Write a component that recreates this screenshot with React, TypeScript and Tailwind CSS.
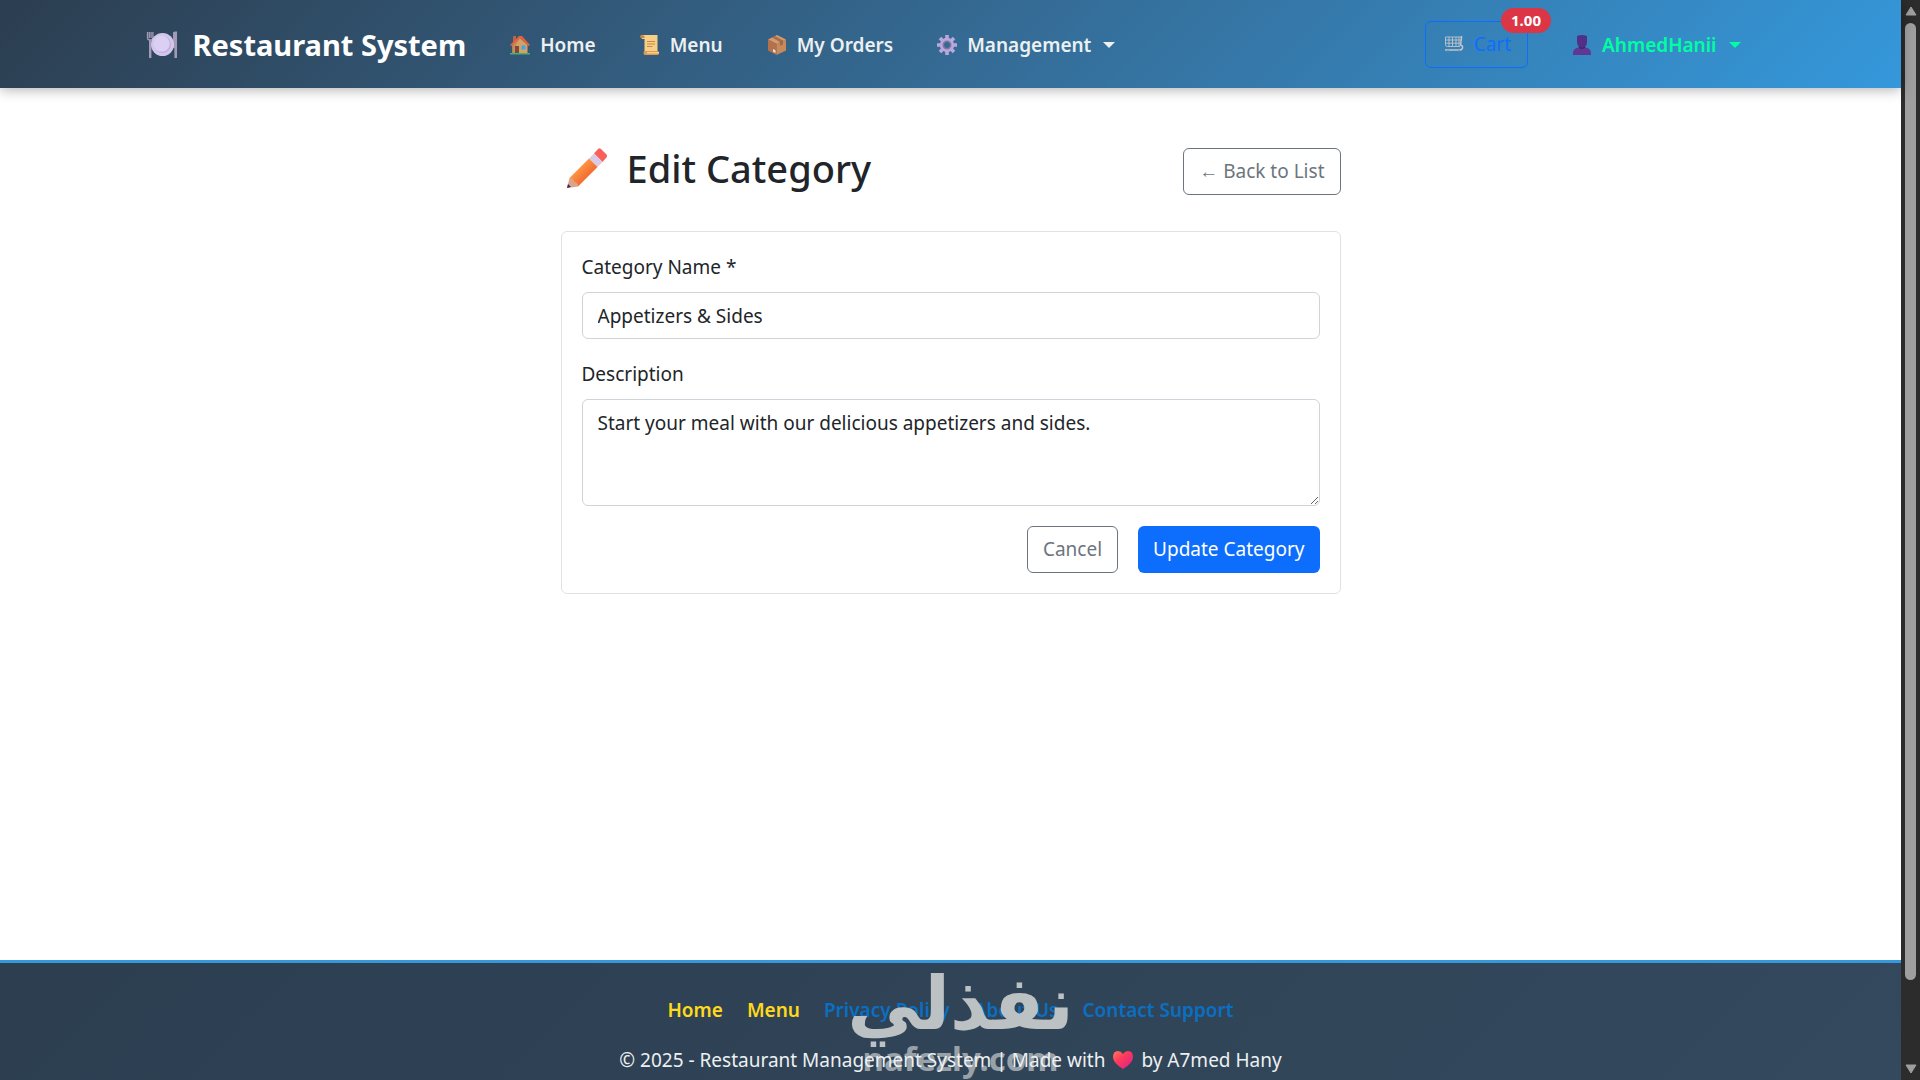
import React from "react";

type IconProps = { className?: string };

const PlateIcon = ({ className }: IconProps) => (
  <svg viewBox="0 0 32 28" className={className} aria-hidden="true">
    <g fill="none" stroke="#a39bb5" strokeWidth="1.3">
      <path d="M1.5 1v6q0 2 2.7 2t2.7-2V1M3.3 1v6M5.1 1v6" />
      <path d="M4.2 9v18" strokeWidth="2.4" />
    </g>
    <path d="M27 1.5q1-1.5 4-1V27h-2.6V17H27z" fill="#a39bb5" />
    <circle cx="16.500" cy="13.500" r="11.500" fill="#d3c6ec" />
    <circle cx="16.500" cy="13.500" r="8.600" fill="#c2b1e0" />
    <circle cx="15.600" cy="12.800" r="8" fill="#dccff4" />
  </svg>
);

const HouseIcon = ({ className }: IconProps) => (
  <svg viewBox="0 0 20 20" className={className} aria-hidden="true">
    <path d="M3 1h3v6H3z" fill="#b5654a" />
    <path d="M2.5 10 10 3l7.5 7v8.5h-15z" fill="#d9a066" />
    <path d="M10 3 2.5 10v8.5H6V10z" fill="#c98b58" />
    <path d="M0 10 9 1h3l8 9-1.5 1L10.5 3 1.5 11z" fill="#e8603c" />
    <path d="M5 11h4v8H5z" fill="#7a4a3c" />
    <path d="M11.5 10.500h4v4h-4z" fill="#3aa7e8" />
    <path d="M0 18h20v1.500H0z" fill="#3fb27a" />
  </svg>
);

const ScrollIcon = ({ className }: IconProps) => (
  <svg viewBox="0 0 20 20" className={className} aria-hidden="true">
    <path d="M3 0h14.500v17H4.500V4H2Q0 0 3 0z" fill="#f8cf86" />
    <path d="M1.500 0Q0 0 0 1.500T1.500 3h3V1.500Q4 0 1.500 0z" fill="#c98545" />
    <path d="M4.500 16h13q1.500 0 1.500 2t-1.500 2H5q-1.500 0-1.500-2t1-2z" fill="#dd9a55" />
    <path d="M7 17h12v1.500H7z" fill="#f8cf86" />
    <path d="M7 6.500h8M7 9h8M7 11.500h5.500" stroke="#c58a4e" fill="none" />
  </svg>
);

const BoxIcon = ({ className }: IconProps) => (
  <svg viewBox="0 0 18 20" className={className} aria-hidden="true">
    <path d="m9 0 9 4.500L8.500 9 0 4.500z" fill="#d79a6b" />
    <path d="M0 4.500 8.500 9v11L0 15.500z" fill="#b5714c" />
    <path d="M18 4.500 8.500 9v11l9.500-4.500z" fill="#c98a5a" />
    <path d="m4 2.500 3-1.500 8 4.500v4l-3 1.300V7z" fill="#8a5640" opacity=".65" />
    <path d="m5 14 2.500 1.300V18L5 16.800z" fill="#e8dce6" />
  </svg>
);

const GearIcon = ({ className }: IconProps) => (
  <svg viewBox="0 0 20 20" className={className} aria-hidden="true">
    <g fill="none" stroke="#b9a8dc" strokeWidth="3.6">
      <path d="M10 0v4M10 16v4M0 10h4M16 10h4M3 3l3 3M14 14l3 3M17 3l-3 3M6 14l-3 3" />
    </g>
    <circle cx="10" cy="10" r="5.200" fill="none" stroke="#b9a8dc" strokeWidth="4" />
    <circle cx="10" cy="10" r="3.700" fill="none" stroke="#7f77a3" strokeWidth="1.600" />
  </svg>
);

const CartIcon = ({ className }: IconProps) => (
  <svg viewBox="0 0 20 18" className={className} aria-hidden="true">
    <g fill="none" stroke="#c4c4c8" strokeWidth="0.900" strokeLinejoin="round">
      <path d="M17.500 1v2l-1 7q2.500.5 2 3-.5 2-3 2H1" strokeWidth="1.500" />
      <path d="M17 2H1.500v7.500q0 2 2 2H16M1.500 5H17M1.500 8.200h15M5 2v9.500M8.500 2v9.500M12 2v9.500M15 2v9.500" />
    </g>
    <path d="M3 15h2v1.500H3zM14 15h2v1.500h-2z" fill="#8a8d92" />
  </svg>
);

const UserIcon = ({ className }: IconProps) => (
  <svg viewBox="0 0 20 20" className={className} aria-hidden="true">
    <path d="M5 1q5-2 10 0v6q0 3-2 5v2H7v-2Q5 10 5 7z" fill="#523087" />
    <path d="M1 20v-2q0-5 7-6h4q7 1 7 6v2z" fill="#5f3794" />
    <path d="M7 11.500q3 2 6 0v1.500q-3 2-6 0z" fill="#40256e" />
  </svg>
);

const PencilIcon = ({ className }: IconProps) => (
  <svg viewBox="0 0 40 40" className={className} aria-hidden="true">
    <defs>
      <linearGradient id="pencil-body" x1="0" y1="0" x2="1" y2="1">
        <stop offset="0.300" stopColor="#ff9a44" />
        <stop offset="0.700" stopColor="#f0662f" />
      </linearGradient>
    </defs>
    <path d="M27 5.500 31 1q1.500-1.500 3 0l5.500 5.500q1 1.500 0 3L35.500 14z" fill="#f9605a" />
    <path d="m22 10.500 5-5 8.500 8.500-5 5z" fill="#d8cbe6" />
    <path d="M2.500 30 22 10.500l8.500 8.500L11 38.500z" fill="url(#pencil-body)" />
    <path d="M2.500 30q4.500 0 4.500 4 4 0 4 4.500L0 40z" fill="#dba58b" />
    <path d="m1 36 3 3-4 1z" fill="#3b2748" />
  </svg>
);

const HeartIcon = ({ className }: IconProps) => (
  <svg viewBox="0 0 20 18" className={className} aria-hidden="true">
    <defs>
      <linearGradient id="heart-fill" x1="0" y1="0" x2="1" y2="1">
        <stop offset="0" stopColor="#ff7a58" />
        <stop offset="0.400" stopColor="#ff3a5c" />
        <stop offset="1" stopColor="#d8208c" />
      </linearGradient>
    </defs>
    <path d="M10 3Q8 0 5 0 0 0 0 6q0 6 10 12Q20 12 20 6q0-6-5-6-3 0-5 3z" fill="url(#heart-fill)" />
  </svg>
);

const Caret = () => (
  <span className="ml-3 h-0 w-0 border-x-6 border-t-6 border-x-transparent border-t-current" aria-hidden="true" />
);

const navItems = [
  { label: "Home", icon: <HouseIcon className="h-5 w-5" /> },
  { label: "Menu", icon: <ScrollIcon className="h-5 w-5" /> },
  { label: "My Orders", icon: <BoxIcon className="h-5 w-5" /> },
];

const footerLinks = ["Privacy Policy", "About Us", "Contact Support"];

function Header() {
  return (
    <header className="relative h-22 shrink-0 bg-linear-135 from-[#2c3e50] to-[#3498db] shadow-[0_2px_12px_rgba(0,0,0,0.3)]">
      <div className="mx-auto flex h-full max-w-[1650px] items-center pr-[35px] pl-5">
        <a href="#" className="mr-11 flex items-center gap-[15px] pt-0.5 text-[29px] font-bold text-white">
          <PlateIcon className="h-7 w-8" />
          Restaurant System
        </a>
        <nav className="flex flex-1 items-center gap-11 pt-0.5 text-[19px] font-semibold text-[#ecf0f1]">
          {navItems.map((item) => (
            <a key={item.label} href="#" className="flex items-center gap-2.5">
              {item.icon}
              {item.label}
            </a>
          ))}
          <button type="button" className="flex items-center">
            <GearIcon className="mr-2.5 h-5 w-5" />
            Management
            <Caret />
          </button>
        </nav>
        <a
          href="#"
          className="relative mr-11 flex h-[47px] items-center gap-2.5 rounded-md border border-[#0d6efd] px-4 pl-[18px] text-[19px] text-[#0d6efd]"
        >
          <CartIcon className="h-[18px] w-5" />
          Cart
          <span className="absolute -top-3.5 -right-6 flex h-[25px] items-center rounded-full bg-[#dc3545] px-2.5 text-[15px] font-bold text-white">
            1.00
          </span>
        </a>
        <button type="button" className="flex items-center pt-0.5 text-[19px] font-semibold text-[#00ffa2]">
          <UserIcon className="mr-2.5 h-5 w-5" />
          AhmedHanii
          <Caret />
        </button>
      </div>
    </header>
  );
}

function EditCategory() {
  return (
    <main className="mx-auto w-full max-w-[780px] flex-1 pt-[60px]">
      <div className="mb-9 flex items-start justify-between">
        <h1 className="flex items-center gap-5 pl-1.5 text-[38px] leading-[40px] font-medium">
          <PencilIcon className="h-10 w-10" />
          Edit Category
        </h1>
        <a href="#" className="flex h-[47px] items-center rounded-md border border-[#6c757d] px-[15px] text-[19px] text-[#6c757d]">
          ← Back to List
        </a>
      </div>
      <form className="rounded-md border border-[#dee2e6] p-5 text-[19px]" onSubmit={(e) => e.preventDefault()}>
        <label htmlFor="name" className="mb-2.5 block leading-[30px]">
          Category Name *
        </label>
        <input
          id="name"
          type="text"
          defaultValue="Appetizers & Sides"
          className="mb-5 block h-[47px] w-full rounded-md border border-[#ced4da] px-[15px]"
        />
        <label htmlFor="description" className="mb-2.5 block leading-[30px]">
          Description
        </label>
        <textarea
          id="description"
          defaultValue="Start your meal with our delicious appetizers and sides."
          className="mb-5 block h-[107px] w-full resize-y rounded-md border border-[#ced4da] px-[15px] py-2 leading-[30px]"
        />
        <div className="flex justify-end gap-5">
          <button type="button" className="h-[47px] rounded-md border border-[#6c757d] px-[15px] text-[#6c757d]">
            Cancel
          </button>
          <button type="submit" className="h-[47px] rounded-md bg-[#0d6efd] px-[15px] text-white">
            Update Category
          </button>
        </div>
      </form>
    </main>
  );
}

function Footer() {
  return (
    <footer className="relative h-30 shrink-0 border-t-3 border-[#3498db] bg-linear-135 from-[#2c3e50] to-[#34495e] pt-8 text-center text-[19px] leading-[30px] text-[#ecf0f1]">
      <nav className="flex justify-center gap-6 font-semibold">
        <a href="#" className="text-[#ffd91a]">Home</a>
        <a href="#" className="text-[#ffd91a]">Menu</a>
        {footerLinks.map((label) => (
          <a key={label} href="#" className="text-[#0a6fc2]">
            {label}
          </a>
        ))}
      </nav>
      <div className="pointer-events-none absolute inset-x-0 top-0 flex flex-col items-center pl-5 font-bold text-[#bcc1c4]">
        <span lang="ar" dir="rtl" className="font-['DejaVu_Sans'] text-[74px] leading-[80px]">
          نفذلي
        </span>
        <span className="text-[33px] leading-[32px] opacity-75">nafezly.com</span>
      </div>
      <p className="relative mt-5 flex items-center justify-center gap-2">
        <span>© 2025 - Restaurant Management System | Made with</span>
        <HeartIcon className="h-[18px] w-5" />
        <span>by A7med Hany</span>
      </p>
    </footer>
  );
}

function ScrollTrack() {
  return (
    <div className="flex w-[19px] shrink-0 flex-col items-center bg-[#2c2c2c] py-1.5" aria-hidden="true">
      <svg viewBox="0 0 12 10" className="h-2.5 w-3 shrink-0">
        <path d="M6 1 11 9H1z" fill="#9f9f9f" stroke="#9f9f9f" strokeLinejoin="round" />
      </svg>
      <div className="mt-[7px] w-[11px] flex-1 rounded-full bg-[#9f9f9f]" />
      <svg viewBox="0 0 12 10" className="mt-[84px] h-2.5 w-3 shrink-0">
        <path d="M6 9 11 1H1z" fill="#9f9f9f" stroke="#9f9f9f" strokeLinejoin="round" />
      </svg>
    </div>
  );
}

export default function App() {
  return (
    <div className="flex h-screen overflow-hidden bg-white font-['Noto_Sans',sans-serif] text-[#212529]">
      <div className="flex min-w-0 flex-1 flex-col">
        <Header />
        <EditCategory />
        <Footer />
      </div>
      <ScrollTrack />
    </div>
  );
}
